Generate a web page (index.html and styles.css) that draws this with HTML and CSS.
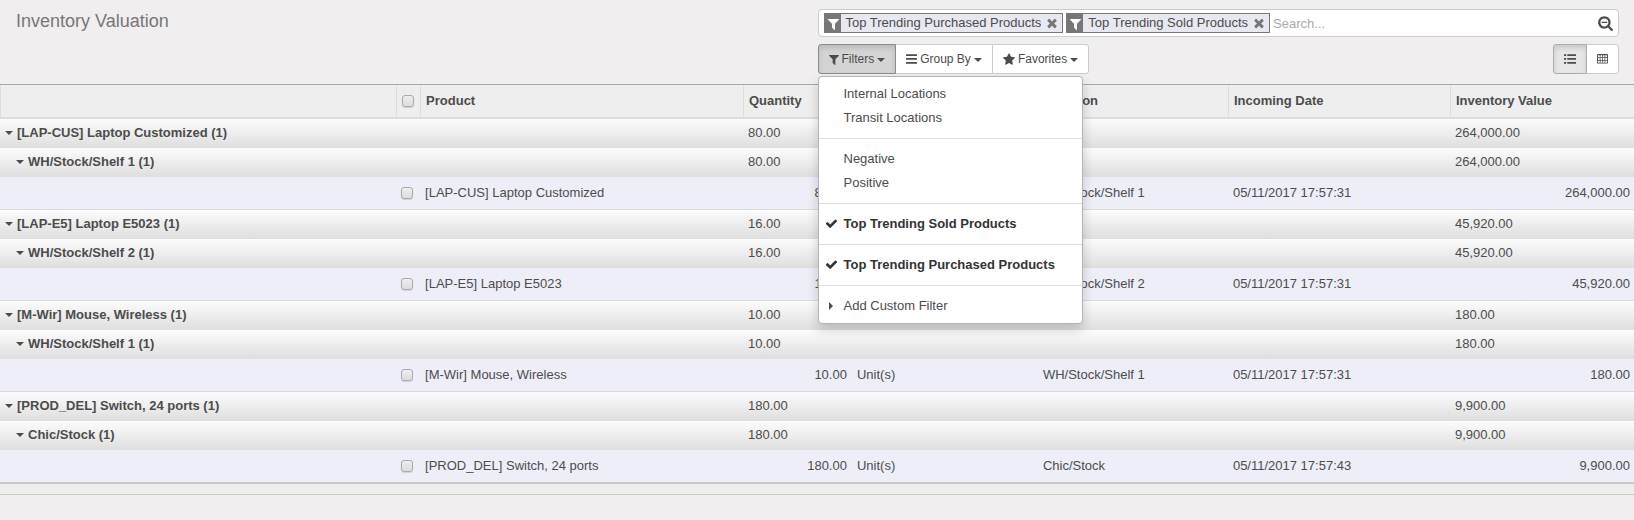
FILE: index.html
```html
<!DOCTYPE html>
<html lang="en">
<head>
<meta charset="utf-8">
<title>Inventory Valuation</title>
<link rel="stylesheet" href="styles.css">
</head>
<body>
<svg class="sprite" aria-hidden="true">
  <symbol id="i-filter" viewBox="0 0 1408 1792"><path transform="matrix(1 0 0 -1 0 1536)" d="M1403 1241q17 -41 -14 -70l-493 -493v-742q0 -42 -39 -59q-13 -5 -25 -5q-27 0 -45 19l-256 256q-19 19 -19 45v486l-493 493q-31 29 -14 70q17 39 59 39h1280q42 0 59 -39z"/></symbol>
  <symbol id="i-times" viewBox="0 0 1408 1792"><path transform="matrix(1 0 0 -1 0 1536)" d="M1298 214q0 -40 -28 -68l-136 -136q-28 -28 -68 -28t-68 28l-294 294l-294 -294q-28 -28 -68 -28t-68 28l-136 136q-28 28 -28 68t28 68l294 294l-294 294q-28 28 -28 68t28 68l136 136q28 28 68 28t68 -28l294 -294l294 294q28 28 68 28t68 -28l136 -136q28 -28 28 -68t-28 -68l-294 -294l294 -294q28 -28 28 -68z"/></symbol>
  <symbol id="i-star" viewBox="0 0 1664 1792"><path transform="matrix(1 0 0 -1 0 1536)" d="M1664 889q0 -22 -26 -48l-363 -354l86 -500q1 -7 1 -20q0 -21 -10.5 -35.5t-30.5 -14.5q-19 0 -40 12l-449 236l-449 -236q-22 -12 -40 -12q-21 0 -31.5 14.5t-10.5 35.5q0 6 2 20l86 500l-364 354q-25 27 -25 48q0 37 56 46l502 73l225 455q19 41 49 41t49 -41l225 -455l502 -73q56 -9 56 -46z"/></symbol>
  <symbol id="i-check" viewBox="0 0 1792 1792"><path transform="matrix(1 0 0 -1 0 1536)" d="M1671 970q0 -40 -28 -68l-724 -724l-136 -136q-28 -28 -68 -28t-68 28l-136 136l-362 362q-28 28 -28 68t28 68l136 136q28 28 68 28t68 -28l294 -295l656 657q28 28 68 28t68 -28l136 -136q28 -28 28 -68z"/></symbol>
  <symbol id="i-search" viewBox="0 0 1664 1792"><path fill-rule="evenodd" transform="matrix(1 0 0 -1 0 1536)" d="M1024 736v-64q0 -13 -9.5 -22.5t-22.5 -9.5h-576q-13 0 -22.5 9.5t-9.5 22.5v64q0 13 9.5 22.5t22.5 9.5h576q13 0 22.5 -9.5t9.5 -22.5zM1152 704q0 185 -131.5 316.5t-316.5 131.5t-316.5 -131.5t-131.5 -316.5t131.5 -316.5t316.5 -131.5t316.5 131.5t131.5 316.5zM1664 -128q0 -53 -37.5 -90.5t-90.5 -37.5q-54 0 -90 38l-343 342q-179 -124 -399 -124q-143 0 -273.5 55.5t-225 150t-150 225t-55.5 273.5t55.5 273.5t150 225t225 150t273.5 55.5t273.5 -55.5t225 -150t150 -225t55.5 -273.5q0 -220 -124 -399l343 -343q37 -37 37 -90z"/></symbol>
  <symbol id="i-bars" viewBox="0 0 11 12"><path d="M.5 1.200h10q.5 0 .5.500v.700q0 .500-.5.500H.5Q0 2.900 0 2.400v-.700Q0 1.200.5 1.200zM.5 5.100h10q.5 0 .5.500v.700q0 .500-.5.500H.5Q0 6.800 0 6.300v-.700Q0 5.100.5 5.100zM.5 9h10q.5 0 .5.500v.700q0 .500-.5.500H.5Q0 10.700 0 10.200v-.700Q0 9 .5 9z"/></symbol>
  <symbol id="i-list" viewBox="0 0 12 12"><path d="M0 1.200h2.200v1.700H0zM3.300 1.200H12v1.700H3.300zM0 5.100h2.200v1.700H0zM3.300 5.100H12v1.700H3.300zM0 9h2.200v1.700H0zM3.300 9H12v1.700H3.300z"/></symbol>
  <symbol id="i-table" viewBox="0 0 12 12"><path fill-rule="evenodd" d="M1.200.500h9.600Q12 .500 12 1.500v8.500q0 1-1.200 1H1.200Q0 11 0 10V1.500q0-1 1.200-1zM1 2v2.200h2V2zM3.800 2v2.200h1.800V2zM6.400 2v2.200h1.800V2zM9 2v2.200h2V2zM1 5v2.100h2V5zM3.800 5v2.100h1.800V5zM6.400 5v2.100h1.800V5zM9 5v2.100h2V5zM1 8v2.100h2V8zM3.800 8v2.100h1.800V8zM6.400 8v2.100h1.800V8zM9 8v2.100h2V8z"/></symbol>
</svg>

<header class="panel">
  <h1 class="title">Inventory Valuation</h1>
  <div class="tools">
    <div class="search">
      <div class="facet">
        <span class="facet-icon"><svg class="icon w11 h14"><use href="#i-filter"/></svg></span>
        <span class="facet-label">Top Trending Purchased Products</span>
        <button class="facet-remove" type="button" aria-label="Remove"><svg class="icon w12 h14"><use href="#i-times"/></svg></button>
      </div>
      <div class="facet">
        <span class="facet-icon"><svg class="icon w11 h14"><use href="#i-filter"/></svg></span>
        <span class="facet-label">Top Trending Sold Products</span>
        <button class="facet-remove" type="button" aria-label="Remove"><svg class="icon w12 h14"><use href="#i-times"/></svg></button>
      </div>
      <input class="search-input" type="text" placeholder="Search..." aria-label="Search">
      <button class="search-more" type="button" aria-label="Advanced search"><svg class="icon w15 h16"><use href="#i-search"/></svg></button>
    </div>
    <div class="toolbar">
      <div class="btn-group">
        <button class="btn btn-open" type="button"><svg class="icon w10 h13"><use href="#i-filter"/></svg>Filters<span class="caret"></span></button>
        <button class="btn" type="button"><svg class="icon w11 h12"><use href="#i-bars"/></svg>Group By<span class="caret"></span></button>
        <button class="btn" type="button"><svg class="icon w12 h13"><use href="#i-star"/></svg>Favorites<span class="caret"></span></button>
        <ul class="menu">
          <li><a class="item" href="#">Internal Locations</a></li>
          <li><a class="item" href="#">Transit Locations</a></li>
          <li class="divider"></li>
          <li><a class="item" href="#">Negative</a></li>
          <li><a class="item" href="#">Positive</a></li>
          <li class="divider"></li>
          <li><a class="item item-on" href="#"><span class="mark"><svg class="icon w13 h13"><use href="#i-check"/></svg></span>Top Trending Sold Products</a></li>
          <li class="divider"></li>
          <li><a class="item item-on" href="#"><span class="mark"><svg class="icon w13 h13"><use href="#i-check"/></svg></span>Top Trending Purchased Products</a></li>
          <li class="divider"></li>
          <li><a class="item" href="#"><span class="mark mark-closed"></span>Add Custom Filter</a></li>
        </ul>
      </div>
      <div class="btn-group">
        <button class="btn btn-active" type="button" aria-label="List"><svg class="icon w12 h12"><use href="#i-list"/></svg></button>
        <button class="btn" type="button" aria-label="Pivot"><svg class="icon w11 h12"><use href="#i-table"/></svg></button>
      </div>
    </div>
  </div>
</header>

<table class="list">
  <colgroup>
    <col class="c-group"><col class="c-check"><col class="c-product"><col class="c-qty"><col class="c-uom"><col class="c-location"><col class="c-date"><col>
  </colgroup>
  <thead>
    <tr><th></th><th class="check"><input type="checkbox" aria-label="Select all"></th><th>Product</th><th>Quantity</th><th></th><th>Location</th><th>Incoming Date</th><th>Inventory Value</th></tr>
  </thead>
  <tbody>
    <tr class="group"><th colspan="3"><span class="fold"></span>[LAP-CUS] Laptop Customized (1)</th><td>80.00</td><td></td><td></td><td></td><td>264,000.00</td></tr>
    <tr class="group sub"><th colspan="3"><span class="fold"></span>WH/Stock/Shelf 1 (1)</th><td>80.00</td><td></td><td></td><td></td><td>264,000.00</td></tr>
    <tr class="row"><td></td><td class="check"><input type="checkbox" aria-label="Select row"></td><td>[LAP-CUS] Laptop Customized</td><td class="num">80.00</td><td>Unit(s)</td><td>WH/Stock/Shelf 1</td><td>05/11/2017 17:57:31</td><td class="num">264,000.00</td></tr>
    <tr class="group"><th colspan="3"><span class="fold"></span>[LAP-E5] Laptop E5023 (1)</th><td>16.00</td><td></td><td></td><td></td><td>45,920.00</td></tr>
    <tr class="group sub"><th colspan="3"><span class="fold"></span>WH/Stock/Shelf 2 (1)</th><td>16.00</td><td></td><td></td><td></td><td>45,920.00</td></tr>
    <tr class="row"><td></td><td class="check"><input type="checkbox" aria-label="Select row"></td><td>[LAP-E5] Laptop E5023</td><td class="num">16.00</td><td>Unit(s)</td><td>WH/Stock/Shelf 2</td><td>05/11/2017 17:57:31</td><td class="num">45,920.00</td></tr>
    <tr class="group"><th colspan="3"><span class="fold"></span>[M-Wir] Mouse, Wireless (1)</th><td>10.00</td><td></td><td></td><td></td><td>180.00</td></tr>
    <tr class="group sub"><th colspan="3"><span class="fold"></span>WH/Stock/Shelf 1 (1)</th><td>10.00</td><td></td><td></td><td></td><td>180.00</td></tr>
    <tr class="row"><td></td><td class="check"><input type="checkbox" aria-label="Select row"></td><td>[M-Wir] Mouse, Wireless</td><td class="num">10.00</td><td>Unit(s)</td><td>WH/Stock/Shelf 1</td><td>05/11/2017 17:57:31</td><td class="num">180.00</td></tr>
    <tr class="group"><th colspan="3"><span class="fold"></span>[PROD_DEL] Switch, 24 ports (1)</th><td>180.00</td><td></td><td></td><td></td><td>9,900.00</td></tr>
    <tr class="group sub"><th colspan="3"><span class="fold"></span>Chic/Stock (1)</th><td>180.00</td><td></td><td></td><td></td><td>9,900.00</td></tr>
    <tr class="row"><td></td><td class="check"><input type="checkbox" aria-label="Select row"></td><td>[PROD_DEL] Switch, 24 ports</td><td class="num">180.00</td><td>Unit(s)</td><td>Chic/Stock</td><td>05/11/2017 17:57:43</td><td class="num">9,900.00</td></tr>
  </tbody>
  <tfoot><tr><td colspan="8"></td></tr></tfoot>
</table>
</body>
</html>
```

FILE: styles.css
```css
* { box-sizing: border-box; }
body {
  margin: 0;
  background: #f0eeee;
  color: #4c4c4c;
  font: 13px/18px "Liberation Sans", Arial, sans-serif;
}
button, input { font: inherit; color: inherit; }
button { cursor: pointer; }
.sprite { display: none; }

.icon { display: block; flex: none; fill: currentColor; }
.w10 { width: 10px; }
.w11 { width: 11px; }
.w12 { width: 12px; }
.w13 { width: 13px; }
.w15 { width: 15px; }
.h12 { height: 12px; }
.h13 { height: 13px; }
.h14 { height: 14px; }
.h16 { height: 16px; }

/* Control panel */
.panel {
  display: grid;
  grid-template-columns: 1fr 1fr;
  padding: 9px 15px 10px 16px;
  border-bottom: 1px solid #aaa5a7;
}
.title { margin: 0; font-size: 18px; line-height: 24px; font-weight: normal; color: #777; }
.tools { display: flex; flex-direction: column; gap: 7px; }

.search {
  display: flex;
  align-items: center;
  gap: 3px;
  min-height: 28px;
  padding: 3px 5px;
  background: #fff;
  border: 1px solid #ccc;
  border-radius: 4px;
}
.facet {
  display: flex;
  height: 20px;
  border: 1px solid #777;
  background: #e8e8f0;
  white-space: nowrap;
}
.facet-icon { display: flex; align-items: center; padding: 2px 2px 0 3px; background: #777; color: #fff; }
.facet-label { padding-left: 5px; }
.facet-remove { display: flex; align-items: center; padding: 0 4px 0 5px; border: 0; background: none; color: #777; }
.search-input { flex: 1; min-width: 0; padding: 1px 0 0; border: 0; outline: 0; background: none; }
.search-input::placeholder { color: #aaa; opacity: 1; }
.search-more { padding: 0; border: 0; background: none; }

.toolbar { display: flex; justify-content: space-between; }
.btn-group { position: relative; display: flex; }
.btn {
  display: flex;
  align-items: center;
  gap: 3px;
  height: 30px;
  padding: 0 10px;
  border: 1px solid #ccc;
  background: #fff;
  font-size: 12px;
}
.btn + .btn { margin-left: -1px; }
.btn:first-of-type { border-radius: 3px 0 0 3px; }
.btn:last-of-type { border-radius: 0 3px 3px 0; }
.btn-open, .btn-active { z-index: 1; }
.btn-open { background: #d4d4d4; border-color: #8c8c8c; box-shadow: inset 0 3px 5px rgba(0, 0, 0, .125); }
.btn-active { background: #e6e6e6; border-color: #adadad; box-shadow: inset 0 3px 5px rgba(0, 0, 0, .125); }
.caret { margin-top: 2px; border: 4px solid transparent; border-top-color: currentColor; border-bottom: 0; }

.menu {
  position: absolute;
  top: 100%;
  left: 0;
  z-index: 10;
  width: 265px;
  margin: 2px 0 0;
  padding: 5px 0;
  list-style: none;
  background: #fff;
  border: 1px solid #b4b4b4;
  border-radius: 4px;
  box-shadow: 0 6px 12px rgba(0, 0, 0, .175);
}
.item { position: relative; display: block; padding: 3px 25px; color: inherit; text-decoration: none; white-space: nowrap; }
.item-on { font-weight: bold; color: #333; }
.divider { height: 1px; margin: 8px 0; background: #e0e0e0; }
.mark { position: absolute; left: 6px; top: 5px; }
.mark-closed { left: 10px; top: 8px; border: 4px solid transparent; border-left-color: #4c4c4c; border-right: 0; }

/* Grouped list */
.list { width: 100%; table-layout: fixed; border-collapse: separate; border-spacing: 0; }
.c-group { width: 24.24%; }
.c-check { width: 24px; }
.c-product { width: 19.76%; }
.c-qty { width: 6.67%; }
.c-uom { width: 11.38%; }
.c-location { width: 11.63%; }
.c-date { width: 13.59%; }
.list th, .list td { padding: 0 4px 0 5px; text-align: left; white-space: nowrap; }
.list thead th {
  height: 34px;
  padding-bottom: 1px;
  background: #eee;
  border-left: 1px solid #ddd;
  border-bottom: 2px solid #dcdcdc;
}
.group { background: linear-gradient(#fcfcfc, #dedede); }
.list .group > * { height: 29px; padding-bottom: 1px; }
.list .group th { padding-left: 5px; }
.list .sub th { padding-left: 16px; }
.fold {
  display: inline-block;
  margin-right: 4px;
  vertical-align: 2px;
  border: 4px solid transparent;
  border-top-color: #4c4c4c;
  border-bottom: 0;
}
.row { background: #eeeef8; }
.list .row td { height: 33px; border-bottom: 1px solid #dadadc; }
.list .row:last-child td { height: 34px; border-bottom: 2px solid #cacaca; }
.list td.num { padding-right: 5px; text-align: right; }
.list td.num:last-child { padding-right: 4px; }
.list th.check { padding: 0 0 1px 5px; }
.list .row td.check { padding: 0 0 1px 5px; }
.list tfoot td { height: 11px; padding: 0; background: #eee; border-bottom: 1px solid #cacaca; }

input[type="checkbox"] {
  appearance: none;
  display: block;
  width: 12px;
  height: 12px;
  margin: 0;
  border: 1px solid #aaa;
  border-radius: 3px;
  background: linear-gradient(#eee, #dcdcdc);
  box-shadow: 0 1px 1px rgba(0, 0, 0, .12);
}
```
